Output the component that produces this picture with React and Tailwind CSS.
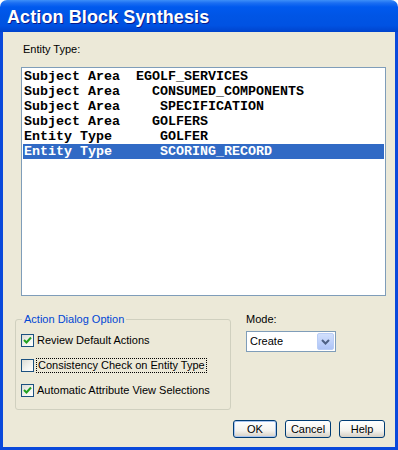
import React from 'react';

const rows = [
  'Subject Area  EGOLF_SERVICES',
  'Subject Area    CONSUMED_COMPONENTS',
  'Subject Area     SPECIFICATION',
  'Subject Area    GOLFERS',
  'Entity Type      GOLFER',
  'Entity Type      SCORING_RECORD',
];

const Check = ({ checked }) => (
  <span className="w-[13px] h-[13px] shrink-0 border border-[#1c5180] bg-[linear-gradient(135deg,#dcdcd5_0%,#f4f4f0_60%,#ffffff_100%)] flex items-center justify-center">
    {checked && (
      <svg width="9" height="9" viewBox="0 0 9 9">
        <path d="M1 4 L3.5 6.5 L8 1.5" stroke="#21a121" strokeWidth="2" fill="none" />
      </svg>
    )}
  </span>
);

const XpButton = ({ label, primary }) => (
  <button
    type="button"
    className={`h-[18px] rounded-[3px] border border-[#003c74] bg-[linear-gradient(to_bottom,#ffffff_0%,#f4f3ee_60%,#d6d0c5_100%)] text-[11px] leading-none text-black ${
      primary ? 'w-[44px] shadow-[inset_0_0_0_1px_#a8c4f0]' : 'w-[46px]'
    }`}
  >
    {label}
  </button>
);

export default function App() {
  return (
    <div className="w-[398px] h-[450px] flex flex-col font-['Liberation_Sans',Arial,sans-serif] text-black">
      {/* Title bar */}
      <div className="h-[32px] shrink-0 rounded-t-[7px] bg-[linear-gradient(to_bottom,#3d8ff8_0px,#1b6ef2_3px,#0059ee_7px,#0055e5_50%,#0052e2_80%,#0043cc_100%)] flex items-center pl-[7px] pt-[2px]">
        <span className="text-white font-bold text-[18px] leading-none tracking-[0.1px] [text-shadow:1px_1px_#0a1a8a]">
          Action Block Synthesis
        </span>
      </div>

      {/* Client area */}
      <div className="flex-1 flex flex-col bg-[#ece9d8] border-x-[3px] border-b-[3px] border-[#0a49db]">
        <div className="pl-[20px] pt-[11px] text-[11px] leading-[13px]">Entity Type:</div>

        <div className="ml-[18px] mt-[11px] w-[365px] h-[229px] shrink-0 border border-[#7f9db9] bg-white px-[1px] pt-[1px]">
          {rows.map((r, i) => (
            <div
              key={r}
              className={`h-[15px] pl-[1px] whitespace-pre font-['Liberation_Mono','Courier_New',monospace] font-bold text-[13.33px] leading-[15px] ${
                i === 5 ? 'bg-[#316ac5] text-white' : 'text-black'
              }`}
            >
              {r}
            </div>
          ))}
        </div>

        <div className="flex mt-[17px] ml-[12px]">
          <fieldset className="w-[216px] h-[97px] border border-[#d0d0bf] rounded-[3px] pl-[5px]">
            <legend className="ml-[1px] px-[2px] text-[11px] leading-[13px] text-[#0046d5]">Action Dialog Option</legend>
            <div className="flex items-center gap-[3px] mt-[8px] text-[11px] leading-[13px]">
              <Check checked />
              <span>Review Default Actions</span>
            </div>
            <div className="flex items-center gap-[2px] mt-[11px] text-[11px] leading-[13px]">
              <Check />
              <span className="border border-dotted border-black px-[1px]">Consistency Check on Entity Type</span>
            </div>
            <div className="flex items-center gap-[3px] mt-[11px] text-[11px] leading-[13px]">
              <Check checked />
              <span>Automatic Attribute View Selections</span>
            </div>
          </fieldset>

          <div className="ml-[15px] flex flex-col">
            <div className="text-[11px] leading-[13px]">Mode:</div>
            <div className="mt-[5px] w-[90px] h-[21px] border border-[#7f9db9] bg-white flex items-center justify-between pl-[3px] pr-[1px]">
              <span className="text-[11px] leading-none">Create</span>
              <span className="w-[17px] h-[17px] rounded-[2px] border border-[#b9cdf6] bg-[linear-gradient(to_bottom,#d2e0fd_0%,#bccff9_60%,#aec4f6_100%)] flex items-center justify-center">
                <svg width="9" height="6" viewBox="0 0 9 6">
                  <path d="M1 1 L4.5 4.5 L8 1" stroke="#4d6185" strokeWidth="2" fill="none" />
                </svg>
              </span>
            </div>
          </div>
        </div>

        <div className="flex justify-end gap-[8px] pr-[10px] mt-[10px]">
          <XpButton label="OK" primary />
          <XpButton label="Cancel" />
          <XpButton label="Help" />
        </div>
      </div>
    </div>
  );
}
